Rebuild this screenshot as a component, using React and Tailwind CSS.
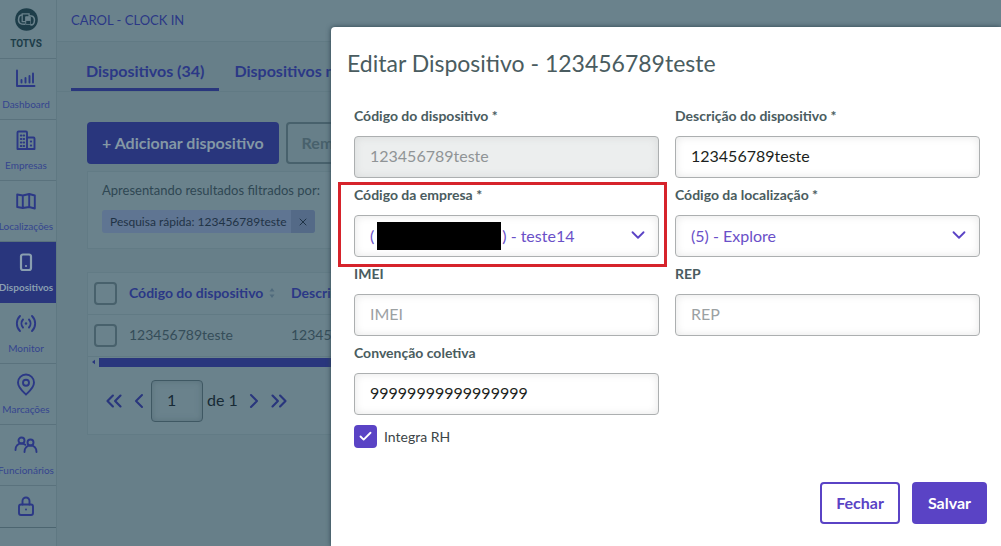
import React, { useState } from 'react';
import { X, Check, ChevronDown, ChevronLeft, ChevronRight, ChevronsLeft, ChevronsRight } from 'lucide-react';

const Icon = ({ children }) => (
  <svg width="24" height="24" viewBox="0 0 24 24" fill="none" stroke="currentColor" strokeWidth="1.9" strokeLinecap="round" strokeLinejoin="round" className="shrink-0 text-[#2b3886]">
    {children}
  </svg>
);

const menuItems = [
  {
    label: 'Dashboard',
    icon: (
      <Icon>
        <path d="M3 3.500v15.500h17.500M7.500 15.500v-2.500M11.500 15.500v-4.500M15.500 15.500V9M19 15.500V6.500" />
      </Icon>
    ),
  },
  {
    label: 'Empresas',
    icon: (
      <Icon>
        <path d="M3.500 21V4.500a1 1 0 0 1 1-1h7.500a1 1 0 0 1 1 1V21zM13 9.500h6.500a1 1 0 0 1 1 1V21H13M6.800 7.500h.6M9.600 7.500h.6M6.800 11h.6M9.600 11h.6M6.800 14.500h.6M9.600 14.500h.6M6.800 18h.6M9.600 18h.6M16.800 13.500h.4M16.800 17.500h.4" />
      </Icon>
    ),
  },
  {
    label: 'Localizações',
    icon: (
      <Icon>
        <path d="M3.200 5.500l5.600 1 6.400-1.500 5.600 1.500v13l-5.600-1.500-6.400 1-5.600-1zM8.800 6.500v12.500M15.200 5v13" />
      </Icon>
    ),
  },
  {
    label: 'Dispositivos',
    active: true,
    icon: (
      <svg width="24" height="24" viewBox="0 0 24 24" fill="none" stroke="currentColor" strokeWidth="2.200" strokeLinecap="round" className="shrink-0">
        <rect x="7" y="4.500" width="10" height="15.500" rx="2" />
        <path d="M12 16h.01" />
      </svg>
    ),
  },
  {
    label: 'Monitor',
    icon: (
      <Icon>
        <path d="M6 5a10.500 10.500 0 0 0 0 15M18 5a10.500 10.500 0 0 1 0 15M9 8.500a6 6 0 0 0 0 8M15 8.500a6 6 0 0 1 0 8" />
        <path d="M12 12.500h.01" strokeWidth="2.400" />
      </Icon>
    ),
  },
  {
    label: 'Marcações',
    icon: (
      <Icon>
        <path d="M12 22.500c-3-3-8-6.800-8-12a8 8 0 0 1 16 0c0 5.200-5 9-8 12z" />
        <circle cx="12" cy="10.800" r="3" />
      </Icon>
    ),
  },
  {
    label: 'Funcionários',
    icon: (
      <Icon>
        <circle cx="7.500" cy="7.500" r="3" />
        <circle cx="16.500" cy="9.500" r="3" />
        <path d="M1.500 17c0-4 2.500-6.500 6-6.500 1.500 0 2.800.5 3.800 1.300M10.500 19c0-4 2.500-6.500 6-6.500s6 2.500 6 6.500" />
      </Icon>
    ),
  },
];

const Sidebar = () => (
  <nav className="flex w-[57px] shrink-0 flex-col overflow-hidden border-r border-[#5f7882] bg-[#6a828c]">
    <a href="#" className="flex h-[59px] shrink-0 flex-col items-center border-b border-[#5a727d] pt-2 pr-1 font-['Roboto',sans-serif] text-[10px] leading-3 font-bold text-[#1d3d49]">
      <svg width="23" height="23" viewBox="0 0 24 24" fill="none" className="mb-1">
        <circle cx="12" cy="12" r="11.800" fill="#1d3d49" />
        <path d="M8 7.500C6 7 4.500 8 4 10c-.6 2.500 0 5 1.500 6.200.9.700 2.500.8 5 .8" stroke="#6a828c" strokeWidth="1.600" />
        <path d="M16 17.500c2 .4 3.500-.5 4-2.500.6-2.500 0-5-1.500-6.200-.9-.7-2.500-.8-4-.8" stroke="#6a828c" strokeWidth="1.600" />
        <path d="M7.500 6.200h7.200v3h-3.200v5H7.500z" fill="#1d3d49" stroke="#6a828c" strokeWidth="1.300" />
        <path d="M10.700 9.200h5.800v8.300h-5.800z" fill="#6a828c" />
        <path d="M11.700 13.500h4.200v3.200h-4.200z" fill="#1d3d49" />
      </svg>
      <span className="pt-[3px]">TOTVS</span>
    </a>
    {menuItems.map((item) => (
      <a
        key={item.label}
        href="#"
        className={
          item.active
            ? 'flex h-[61px] shrink-0 flex-col items-center gap-[5px] bg-[#29367d] pt-2 pr-1 text-[10px] leading-4 font-bold text-[#8a9fb0]'
            : 'flex h-[61px] shrink-0 flex-col items-center gap-[5px] border-b border-[#5a727d] pt-2 pr-1 text-[10px] leading-4 text-[#35458f]'
        }
      >
        {item.icon}
        {item.label}
      </a>
    ))}
    <a href="#" aria-label="Segurança" className="flex h-[42px] shrink-0 justify-center border-b border-[#4c6570] pt-2 pr-1">
      <Icon>
        <rect x="5" y="10.500" width="14" height="10.500" rx="2" />
        <path d="M8.500 10.500V7a3.500 3.500 0 0 1 7 0v3.500M12 15.500h.01" />
      </Icon>
    </a>
  </nav>
);

const checkboxClass = 'block size-[23px] appearance-none rounded-[4px] border-2 border-[#48616c]';

const DevicesPage = () => (
  <main className="flex min-w-0 flex-1 flex-col overflow-hidden bg-[#677f89]">
    <header className="flex h-[42px] shrink-0 items-center border-b border-[#617a84] bg-[#6a828c] pl-[14px] text-[13px] text-[#2b3886]">
      CAROL - CLOCK IN
    </header>
    <div className="flex h-[50px] shrink-0 border-b border-[#617a84] pl-[14px] text-base font-bold whitespace-nowrap text-[#2b3886]">
      <button className="border-b-[3px] border-[#29367d] px-[15px] pt-3">Dispositivos (34)</button>
      <button className="border-b-[3px] border-transparent px-[15px] pt-3">Dispositivos não cadastrados</button>
    </div>

    <div className="flex flex-col pt-[30px] pl-[30px]">
      <div className="flex gap-[7px] whitespace-nowrap">
        <button className="h-[42px] rounded-[4px] bg-[#29367d] px-[15px] text-base font-bold text-[#8498a5]">+ Adicionar dispositivo</button>
        <button className="h-[42px] rounded-[4px] border-2 border-[#48616c] px-[14px] text-base font-bold text-[#48616c]">Remover</button>
      </div>

      <section className="mt-[7px] flex h-[78px] flex-col items-start gap-2 border border-[#627b85] bg-[#6a828c] px-[14px] pt-2 text-[13px] leading-5 text-[#2f4753]">
        <p>Apresentando resultados filtrados por:</p>
        <div className="mt-[2px] flex h-[23px] items-center overflow-hidden rounded-[3px] bg-[#5f7592] text-xs text-[#1f3346]">
          <span className="pr-1 pl-2">Pesquisa rápida: 123456789teste</span>
          <button aria-label="Remover filtro" className="flex h-full w-6 items-center justify-center bg-[#546a87]">
            <X size={12} />
          </button>
        </div>
      </section>

      <section className="mt-[23px] border border-[#627b85] bg-[#6a828c] text-sm whitespace-nowrap">
        <table className="w-full table-fixed text-left">
          <thead>
            <tr className="h-[41px] border-b border-[#617a84] text-[#2b3886]">
              <th className="w-[41px] pl-[6px] align-middle">
                <input type="checkbox" aria-label="Selecionar todos" className={checkboxClass} />
              </th>
              <th className="w-[162px] font-bold">
                <span className="flex items-center gap-[6px]">
                  Código do dispositivo
                  <svg width="6" height="10" viewBox="0 0 6 10" fill="#506a7c">
                    <path d="M3 0L5.500 3.500H.5zM3 10L.5 6.500h5z" />
                  </svg>
                </span>
              </th>
              <th className="font-bold">Descrição do dispositivo</th>
            </tr>
          </thead>
          <tbody>
            <tr className="h-[42px] border-b border-[#617a84] text-[#354d59]">
              <td className="pl-[6px] align-middle">
                <input type="checkbox" aria-label="Selecionar 123456789teste" className={checkboxClass} />
              </td>
              <td>123456789teste</td>
              <td>123456789teste</td>
            </tr>
          </tbody>
        </table>
        <div className="flex h-[11px] items-center gap-1 pl-1">
          <svg width="3" height="6" viewBox="0 0 4 6" fill="#29367d">
            <path d="M4 0v6L0 3z" />
          </svg>
          <div className="h-[9px] flex-1 bg-[#29367d]" />
        </div>
        <div className="flex h-[66px] items-center pl-[13px] text-base text-[#172a35]">
          <button aria-label="Primeira página" className="text-[#29367d]"><ChevronsLeft size={26} /></button>
          <button aria-label="Página anterior" className="text-[#29367d]"><ChevronLeft size={24} /></button>
          <input aria-label="Página" defaultValue="1" className="h-[42px] w-[52px] rounded-[4px] border border-[#3f5863] bg-transparent px-[15px] pb-[3px] shadow-[inset_0_0_6px_#58707b]" />
          <span className="px-1 pb-[2px]">de 1</span>
          <button aria-label="Próxima página" className="text-[#29367d]"><ChevronRight size={24} /></button>
          <button aria-label="Última página" className="text-[#29367d]"><ChevronsRight size={26} /></button>
        </div>
      </section>
    </div>
  </main>
);

const inputClass =
  'h-[42px] w-full rounded-[4px] border border-[#acafb0] px-[15px] pb-[3px] text-base text-[#1c1f20] shadow-[inset_0_0_8px_#e6e6e6] placeholder:text-[#9ca1a3] disabled:bg-[#eceeee] disabled:text-[#909496] disabled:shadow-[inset_0_0_8px_#d8dada]';

const Field = ({ id, label, children }) => (
  <div className="relative flex flex-col gap-[10px]">
    <label htmlFor={id} className="text-sm leading-5 font-bold text-[#4a5c60]">{label}</label>
    {children}
  </div>
);

const Select = ({ id, option }) => (
  <div className="relative">
    <select id={id} className="h-[42px] w-full appearance-none rounded-[4px] border border-[#acafb0] bg-white px-[15px] text-base text-[#6a50c8] shadow-[inset_0_0_8px_#e6e6e6]">
      <option>{option}</option>
    </select>
    <ChevronDown size={22} className="pointer-events-none absolute top-[9px] right-[10px] text-[#5a43c5]" />
  </div>
);

const EditDeviceModal = () => {
  const [integraRh, setIntegraRh] = useState(true);

  return (
    <div role="dialog" aria-label="Editar Dispositivo" className="absolute top-[27px] right-0 bottom-0 left-[331px] flex flex-col rounded-tl-[4px] bg-white pr-[14px] pb-[22px] pl-4 shadow-[0_0_5px_#2c434e]">
      <h1 className="pt-5 text-[23px] leading-8 text-[#4a5c60]">Editar Dispositivo - 123456789teste</h1>
      <form className="grid grid-cols-2 gap-x-4 gap-y-[7px] pt-[27px] pr-[7px] pl-[7px]">
        <Field id="codigo" label="Código do dispositivo *">
          <input id="codigo" disabled defaultValue="123456789teste" className={inputClass} />
        </Field>
        <Field id="descricao" label="Descrição do dispositivo *">
          <input id="descricao" defaultValue="123456789teste" className={inputClass} />
        </Field>
        <Field id="empresa" label="Código da empresa *">
          {/* em spaces keep the room of the hidden company number */}
          <Select id="empresa" option={'(' + '\u2003'.repeat(10) + '\u2002) - teste14'} />
          <div className="absolute top-[37px] left-[23px] h-7 w-[124px] bg-black" />
          <div className="pointer-events-none absolute -top-[3px] -right-2 -bottom-[10px] -left-4 border-[3px] border-[#d6232b]" />
        </Field>
        <Field id="localizacao" label="Código da localização *">
          <Select id="localizacao" option="(5) - Explore" />
        </Field>
        <Field id="imei" label="IMEI">
          <input id="imei" placeholder="IMEI" className={inputClass} />
        </Field>
        <Field id="rep" label="REP">
          <input id="rep" placeholder="REP" className={inputClass} />
        </Field>
        <Field id="convencao" label="Convenção coletiva">
          <input id="convencao" defaultValue="99999999999999999" className={inputClass} />
        </Field>
        <label className="col-start-1 flex items-center gap-[7px] pt-[3px] text-sm text-[#3c4547]">
          <span className="relative flex">
            <input
              type="checkbox"
              checked={integraRh}
              onChange={() => setIntegraRh(!integraRh)}
              className="size-[23px] appearance-none rounded-[4px] border-2 border-[#5a43c5] checked:bg-[#5a43c5]"
            />
            {integraRh && <Check size={15} strokeWidth={3} className="pointer-events-none absolute top-1 left-1 text-white" />}
          </span>
          Integra RH
        </label>
      </form>
      <footer className="mt-auto flex justify-end gap-3 text-base font-bold">
        <button className="h-[42px] rounded-[4px] border-2 border-[#5a43c5] px-[14px] text-[#5a43c5]">Fechar</button>
        <button className="h-[42px] rounded-[4px] bg-[#5a43c5] px-4 text-white">Salvar</button>
      </footer>
    </div>
  );
};

const App = () => {
  return (
    <div className="relative flex h-screen overflow-hidden bg-[#677f89] font-['Lato',sans-serif]">
      <Sidebar />
      <DevicesPage />
      <EditDeviceModal />
    </div>
  );
};

export default App;
